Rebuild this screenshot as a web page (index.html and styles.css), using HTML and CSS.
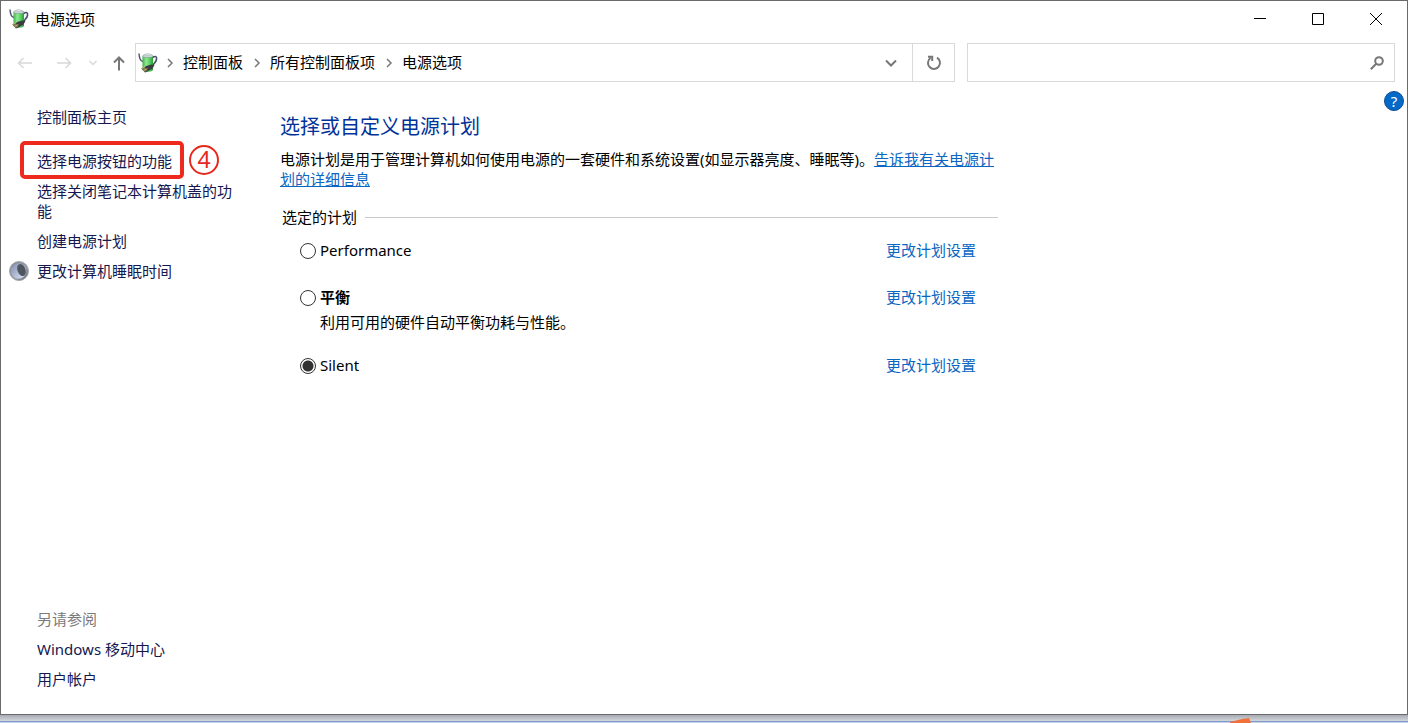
FILE: index.html
```html
<!DOCTYPE html>
<html lang="zh-CN">
<head>
<meta charset="utf-8">
<title>电源选项</title>
<link rel="stylesheet" href="styles.css">
</head>
<body>
<svg class="defs" aria-hidden="true">
  <defs>
    <linearGradient id="cell" x1="0" x2="1" y1="0" y2="0">
      <stop offset="0" stop-color="#3fae49"/><stop offset=".35" stop-color="#8fea92"/><stop offset=".65" stop-color="#5ad465"/><stop offset="1" stop-color="#2c9a3a"/>
    </linearGradient>
    <linearGradient id="moon" x1="0" x2="1" y1="0" y2="1">
      <stop offset="0" stop-color="#7c828b"/><stop offset=".6" stop-color="#989da5"/><stop offset="1" stop-color="#5d636b"/>
    </linearGradient>
    <linearGradient id="crescent" x1="0" x2="1" y1="0" y2="1">
      <stop offset="0" stop-color="#7f8cae"/><stop offset="1" stop-color="#dfe7f8"/>
    </linearGradient>
    <symbol id="battery" viewBox="0 0 20 20">
      <path d="M5 8.500C2.500 8 1.200 4.500 1 .5" fill="none" stroke="#46506a" stroke-width="1.400"/>
      <path d="M14.500 4.500c3-2 4.500-1 4 2-.3 2-1.500 3-3.500 5.500" fill="none" stroke="#46506a" stroke-width="1.600"/>
      <path d="M4.500 3v13.500c0 3.300 10.500 3.300 10.500 0V3z" fill="url(#cell)"/>
      <ellipse cx="9.750" cy="3" rx="5.250" ry="1.600" fill="#c9d8d6" stroke="#7d928c" stroke-width=".6"/>
      <ellipse cx="9.750" cy="1.500" rx="2.600" ry="1" fill="#dfe8ea" stroke="#93a3a4" stroke-width=".4"/>
      <path d="M4 16l4-3 5.500-1.500 3 .5-2 3.500-5 3-2.500 1z" fill="#3a3c40"/>
      <path d="M3 15.500l3.500-1.500 3 3-2.500 2z" fill="#7d7a50"/>
      <path d="M3.500 15.500l4-2M5.500 17.500l4-2" stroke="#d2c67a" stroke-width=".7"/>
    </symbol>
    <symbol id="chevron" viewBox="0 0 8 10"><path d="M2 1l4 4-4 4" fill="none" stroke="#777" stroke-width="1.500"/></symbol>
  </defs>
</svg>

<div class="window">
  <header class="titlebar">
    <svg class="app-icon"><use href="#battery"/></svg>
    <h1 class="title">电源选项</h1>
    <div class="controls">
      <button class="control" aria-label="最小化"><svg width="12" height="12" viewBox="0 0 12 12"><path d="M0 5.500h12"/></svg></button>
      <button class="control" aria-label="最大化"><svg width="12" height="12" viewBox="0 0 12 12"><path d="M.5.5h11v11H.5z"/></svg></button>
      <button class="control" aria-label="关闭"><svg width="12" height="12" viewBox="0 0 12 12"><path d="M0 0l12 12M12 0L0 12"/></svg></button>
    </div>
  </header>

  <div class="toolbar">
    <nav class="history">
      <button class="nav-button" aria-label="后退" disabled><svg width="16" height="12" viewBox="0 0 16 12"><path d="M15 6H1.500M6.500 1l-5 5 5 5"/></svg></button>
      <button class="nav-button" aria-label="前进" disabled><svg width="16" height="12" viewBox="0 0 16 12"><path d="M1 6h13.500M9.500 1l5 5-5 5"/></svg></button>
      <button class="nav-button recent" aria-label="最近" disabled><svg width="10" height="8" viewBox="0 0 10 8"><path d="M1.500 2L5 5.500 8.500 2"/></svg></button>
      <button class="nav-button up" aria-label="上移"><svg width="12" height="16" viewBox="0 0 12 16"><path d="M6 15.500V2.500M1 7.500l5-5 5 5"/></svg></button>
    </nav>
    <div class="address">
      <svg class="app-icon"><use href="#battery"/></svg>
      <svg class="chevron"><use href="#chevron"/></svg>
      <a class="crumb" href="#">控制面板</a>
      <svg class="chevron"><use href="#chevron"/></svg>
      <a class="crumb" href="#">所有控制面板项</a>
      <svg class="chevron"><use href="#chevron"/></svg>
      <a class="crumb" href="#">电源选项</a>
      <button class="address-button drop" aria-label="以前的位置"><svg width="12" height="8" viewBox="0 0 12 8"><path d="M1 1.500l5 5 5-5"/></svg></button>
      <button class="address-button refresh" aria-label="刷新"><svg width="16" height="16" viewBox="0 0 16 16"><path d="M11 2.700A6 6 0 1 1 4.500 3M2 1.800h4.200v4.200"/></svg></button>
    </div>
    <div class="search">
      <input class="search-input" type="search" aria-label="搜索">
      <svg class="search-icon" width="14" height="14" viewBox="0 0 14 14"><circle cx="9" cy="5" r="3.800"/><path d="M6.200 7.800L.8 13.200"/></svg>
    </div>
  </div>

  <div class="content">
    <aside class="sidebar">
      <a class="side-link home" href="#">控制面板主页</a>
      <div class="marked">
        <span class="frame"><a class="side-link" href="#">选择电源按钮的功能</a></span>
        <svg class="step" role="img" aria-label="4" viewBox="0 0 32 32"><circle cx="16" cy="16" r="14"/><text x="16" y="24">4</text></svg>
      </div>
      <a class="side-link" href="#">选择关闭笔记本计算机盖的功能</a>
      <a class="side-link" href="#">创建电源计划</a>
      <div class="sleep">
        <svg class="moon" viewBox="0 0 20 20"><circle cx="10" cy="10" r="9.500" fill="url(#moon)" stroke="#a3a8ae"/><circle cx="9.500" cy="10" r="7.700" fill="url(#crescent)"/><ellipse cx="12.500" cy="9" rx="4" ry="6.300" transform="rotate(-22 12.500 9)" fill="#50565f"/></svg>
        <a class="side-link" href="#">更改计算机睡眠时间</a>
      </div>
      <div class="see-also">
        <h2 class="see-title">另请参阅</h2>
        <a class="side-link" href="#">Windows 移动中心</a>
        <a class="side-link" href="#">用户帐户</a>
      </div>
    </aside>

    <main class="main">
      <h2 class="heading">选择或自定义电源计划</h2>
      <p class="intro">电源计划是用于管理计算机如何使用电源的一套硬件和系统设置(如显示器亮度、睡眠等)。<a class="link underlined" href="#">告诉我有关电源计划的详细信息</a></p>
      <fieldset class="plans">
        <legend class="legend">选定的计划</legend>
        <div class="plan">
          <input class="radio" type="radio" name="plan" id="performance">
          <label class="plan-name" for="performance">Performance</label>
          <a class="link" href="#">更改计划设置</a>
        </div>
        <div class="plan">
          <input class="radio" type="radio" name="plan" id="balanced">
          <label class="plan-name recommended" for="balanced">平衡</label>
          <a class="link" href="#">更改计划设置</a>
          <p class="plan-note">利用可用的硬件自动平衡功耗与性能。</p>
        </div>
        <div class="plan">
          <input class="radio" type="radio" name="plan" id="silent" checked>
          <label class="plan-name" for="silent">Silent</label>
          <a class="link" href="#">更改计划设置</a>
        </div>
      </fieldset>
    </main>
    <button class="help" aria-label="帮助">?</button>
  </div>
</div>
<div class="desktop"><svg class="flag" width="22" height="5" viewBox="0 0 22 5"><path d="M0 4l12-3 7-1 2 5H0z" fill="#f2703a"/></svg></div>
</body>
</html>
```
FILE: styles.css
```css
* { box-sizing: border-box; }

body {
  margin: 0;
  min-height: 100vh;
  display: flex;
  flex-direction: column;
  background: #c9cdd6;
  color: #000;
  font: 15px/20px "Noto Sans", "Noto Sans CJK SC", sans-serif;
}

h1, h2, p { margin: 0; font-size: 15px; font-weight: 400; }
a { text-decoration: none; }
button { padding: 0; border: 0; background: none; font: inherit; }
svg { flex: none; }

.defs { position: absolute; width: 0; height: 0; }

.window {
  flex: 1;
  display: flex;
  flex-direction: column;
  border: 1px solid #6a6a6c;
  background: #fff;
}

.titlebar { display: flex; align-items: center; height: 36px; padding: 0 2px 0 8px; }
.app-icon { width: 20px; height: 20px; }
.title { margin-left: 6px; }
.controls { display: flex; margin-left: auto; }
.control { display: grid; place-items: center; width: 58px; height: 36px; }
.control svg { fill: none; stroke: #000; }

.toolbar { display: flex; margin-top: 6px; padding-right: 12px; }
.history { display: flex; align-items: center; width: 134px; padding-left: 4px; }
.nav-button { display: grid; place-items: center; width: 39px; height: 39px; }
.nav-button svg { fill: none; stroke: #d8d8d8; stroke-width: 1.5; }
.recent { width: 20px; }
.up { width: 32px; }
.up svg { stroke: #777; stroke-width: 2; }

.address { flex: 816; display: flex; align-items: center; height: 39px; border: 1px solid #d9d9d9; padding-left: 2px; }
.chevron { width: 8px; height: 10px; margin: 0 8px; }
.crumb { padding: 0 2px 2px 1px; color: #000; }
.address-button { display: grid; place-items: center; width: 42px; height: 37px; }
.address-button svg { fill: none; stroke: #777; stroke-width: 2; }
.drop { margin-left: auto; }
.refresh { border-left: 1px solid #d9d9d9; }

.search { flex: 416; display: flex; align-items: center; height: 39px; margin-left: 12px; padding-right: 10px; border: 1px solid #d9d9d9; }
.search-input { flex: 1; min-width: 0; height: 36px; border: 0; outline: 0; background: none; font: inherit; }
.search-icon { fill: none; stroke: #777; stroke-width: 2; }

.content { flex: 1; display: flex; padding-top: 9px; }

.sidebar { width: 279px; display: flex; flex-direction: column; align-items: flex-start; gap: 10px; padding: 16px 40px 25px 36px; }
.side-link { color: #15174f; }
.home { margin-bottom: 4px; }
.marked { display: flex; align-items: center; gap: 4px; margin: 0 -12px -8px -17px; }
.frame { padding: 7px 8px 5px 13px; border: 4px solid #ee2a1e; border-radius: 5px; white-space: nowrap; line-height: 18px; }
.step { width: 32px; height: 32px; }
.step circle { fill: none; stroke: #e8281c; stroke-width: 2; }
.step text { fill: #e8281c; font-size: 23px; text-anchor: middle; }
.sleep { display: flex; gap: 8px; margin-left: -28px; }
.moon { width: 20px; height: 20px; }
.see-also { display: flex; flex-direction: column; gap: 10px; margin-top: auto; }
.see-title { color: #7b7b7b; }

.main { flex: 0 1 718px; padding-top: 24px; }
.heading { color: #003399; font-size: 20px; line-height: 24px; }
.intro { margin-top: 10px; }
.link { color: #0a66c2; }
.underlined { text-decoration: underline; }

.plans { margin: 18px 0 0; padding: 0 22px 0 20px; border: 0; }
.legend { display: flex; align-items: center; gap: 8px; width: calc(100% + 42px); margin: 0 -22px 13px -20px; padding: 0 0 0 2px; }
.legend::after { content: ""; flex: 1; height: 1px; background: #c8c8c8; }
.plan { display: grid; grid-template-columns: 16px 1fr auto; column-gap: 4px; align-items: center; align-content: start; min-height: 24px; margin-bottom: 23px; }
.radio { appearance: none; width: 16px; height: 16px; margin: 2px 0 0; border: 1px solid #333; border-radius: 50%; background: #fff; }
.radio:checked { background: radial-gradient(circle, #333 5px, #fff 6px); }
.recommended { font-weight: 700; }
.plan-note { grid-column: 2 / 4; margin-top: 5px; }

.help { width: 20px; height: 20px; margin: 0 3px 0 auto; border: 1px solid #0b4c92; border-radius: 50%; background: #0569c8; color: #fff; font-size: 15px; line-height: 18px; }

.desktop { display: flex; justify-content: flex-end; align-items: flex-end; height: 8px; padding-right: 156px; background: linear-gradient(#a9abb2 0, #d3d6dd 6px, #7f9cc9 6px, #7f9cc9 7px, #c3d3ec 7px); }
```
